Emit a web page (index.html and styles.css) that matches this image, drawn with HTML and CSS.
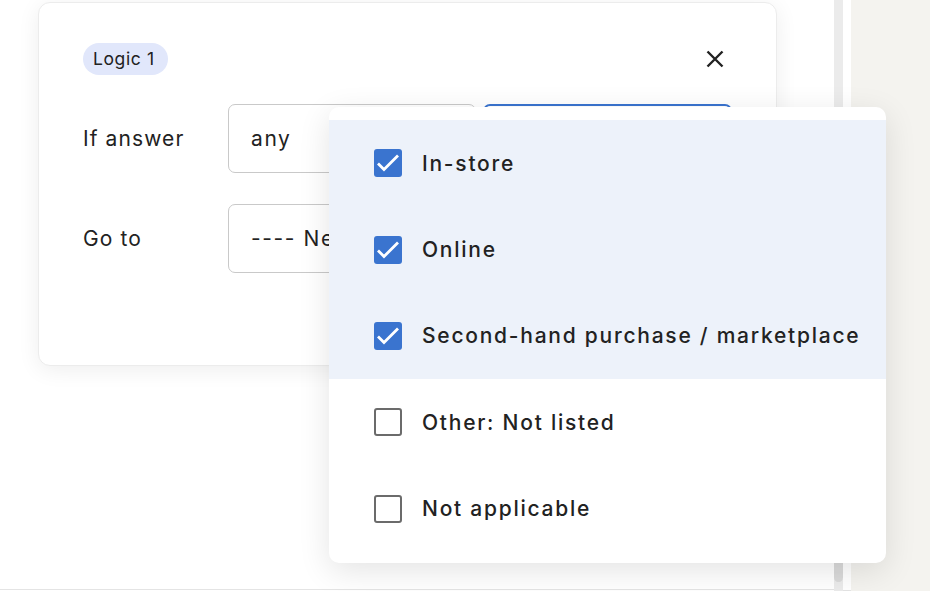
FILE: index.html
```html
<!DOCTYPE html>
<html lang="en">
<head>
    <meta charset="UTF-8">
    <title>Logic</title>
    <link rel="stylesheet" href="styles.css">
</head>
<body>
    <div class="page">
        <div class="main">
            <div class="logic-card">
                <div class="card-head">
                    <span class="badge">Logic 1</span>
                    <span class="close">
                        <svg width="18" height="18" viewBox="0 0 18 18"><path d="M1.5 1.5L16.5 16.5M16.5 1.5L1.5 16.5" stroke="#222" stroke-width="2.4"/></svg>
                    </span>
                </div>
                <div class="row">
                    <div class="label">If answer</div>
                    <div class="field">any</div>
                    <div class="field active"></div>
                </div>
                <div class="row">
                    <div class="label">Go to</div>
                    <div class="field wide"><span class="clip">---- Next question ----</span></div>
                </div>
            </div>

            <div class="dropdown">
                <div class="option checked">
                    <span class="box"><svg width="28" height="28" viewBox="0 0 28 28"><path d="M4 14.5L10 20.5L24 6.5" fill="none" stroke="#fff" stroke-width="2.8"/></svg></span>
                    In-store
                </div>
                <div class="option checked">
                    <span class="box"><svg width="28" height="28" viewBox="0 0 28 28"><path d="M4 14.5L10 20.5L24 6.5" fill="none" stroke="#fff" stroke-width="2.8"/></svg></span>
                    Online
                </div>
                <div class="option checked">
                    <span class="box"><svg width="28" height="28" viewBox="0 0 28 28"><path d="M4 14.5L10 20.5L24 6.5" fill="none" stroke="#fff" stroke-width="2.8"/></svg></span>
                    Second-hand purchase / marketplace
                </div>
                <div class="option">
                    <span class="box"></span>
                    Other: Not listed
                </div>
                <div class="option">
                    <span class="box"></span>
                    Not applicable
                </div>
            </div>
        </div>
        <div class="scrollbar"><div class="thumb"></div></div>
        <div class="gutter"></div>
        <div class="side"></div>
    </div>
</body>
</html>
```

FILE: styles.css
```css
body {
    margin: 0;
    font-family: 'Inter', 'Open Sans', sans-serif;
    color: #222;
    background: #fff;
}

.page {
    display: flex;
    height: 591px;
    overflow: hidden;
}

.main {
    width: 834px;
    position: relative;
    border-bottom: 1px solid #e4e4e4;
    box-sizing: border-box;
    height: 590px;
}

/* logic card */
.logic-card {
    margin: 2px 0 0 38px;
    width: 739px;
    height: 364px;
    box-sizing: border-box;
    border: 1px solid #ececec;
    border-radius: 12px;
    background: #fff;
    box-shadow: 0 4px 22px rgba(0, 0, 0, 0.07);
    padding: 40px 44px 0 44px;
}

.card-head {
    display: flex;
    justify-content: space-between;
    align-items: center;
    height: 32px;
}

.badge {
    background: #e1e7fb;
    border-radius: 16px;
    padding: 0 13px 0 10px;
    height: 32px;
    line-height: 32px;
    font-size: 17.5px;
    letter-spacing: 0.6px;
}

.close {
    display: flex;
    margin-right: 8px;
}

.row {
    display: flex;
    align-items: center;
    gap: 7px;
    margin-top: 29px;
}

.row + .row {
    margin-top: 31px;
}

.label {
    width: 138px;
    font-size: 21px;
    letter-spacing: 1.1px;
}

.field {
    width: 248px;
    height: 69px;
    box-sizing: border-box;
    border: 1px solid #c9c9c9;
    border-radius: 7px;
    display: flex;
    align-items: center;
    padding-left: 22px;
    font-size: 21px;
    letter-spacing: 1.6px;
}

.field.active {
    width: 249px;
    border: 2px solid #3a74cf;
}

.field.wide {
    width: 504px;
}

.clip {
    width: 78px;
    overflow: hidden;
    white-space: nowrap;
}

/* dropdown */
.dropdown {
    position: absolute;
    left: 329px;
    top: 107px;
    width: 557px;
    height: 456px;
    box-sizing: border-box;
    padding: 13px 0 12px;
    background: #fff;
    border-radius: 10px;
    box-shadow: 0 8px 32px rgba(0, 0, 0, 0.11);
    z-index: 2;
}

.option {
    height: 86.4px;
    display: flex;
    align-items: center;
    padding-left: 45px;
    font-size: 21px;
    font-weight: 500;
    letter-spacing: 1.75px;
    color: #222;
}

.option.checked {
    background: #edf2fa;
}

.box {
    width: 28px;
    height: 28px;
    box-sizing: border-box;
    border: 2.5px solid #6b6b6b;
    border-radius: 3px;
    margin-right: 20px;
    background: #fff;
    position: relative;
}

.checked .box {
    background: #3a74cf;
    border: none;
}

/* right side */
.scrollbar {
    width: 9px;
    background: #ebebeb;
    display: flex;
    flex-direction: column;
    justify-content: flex-end;
    padding-bottom: 9px;
    box-sizing: border-box;
}

.thumb {
    height: 48px;
    background: #dadada;
    border-radius: 0 0 5px 5px;
}

.gutter {
    width: 8px;
    background: #fff;
    border-bottom: 1px solid #e4e4e4;
    box-sizing: border-box;
}

.side {
    flex: 1;
    background: #f4f3ef;
}
```
